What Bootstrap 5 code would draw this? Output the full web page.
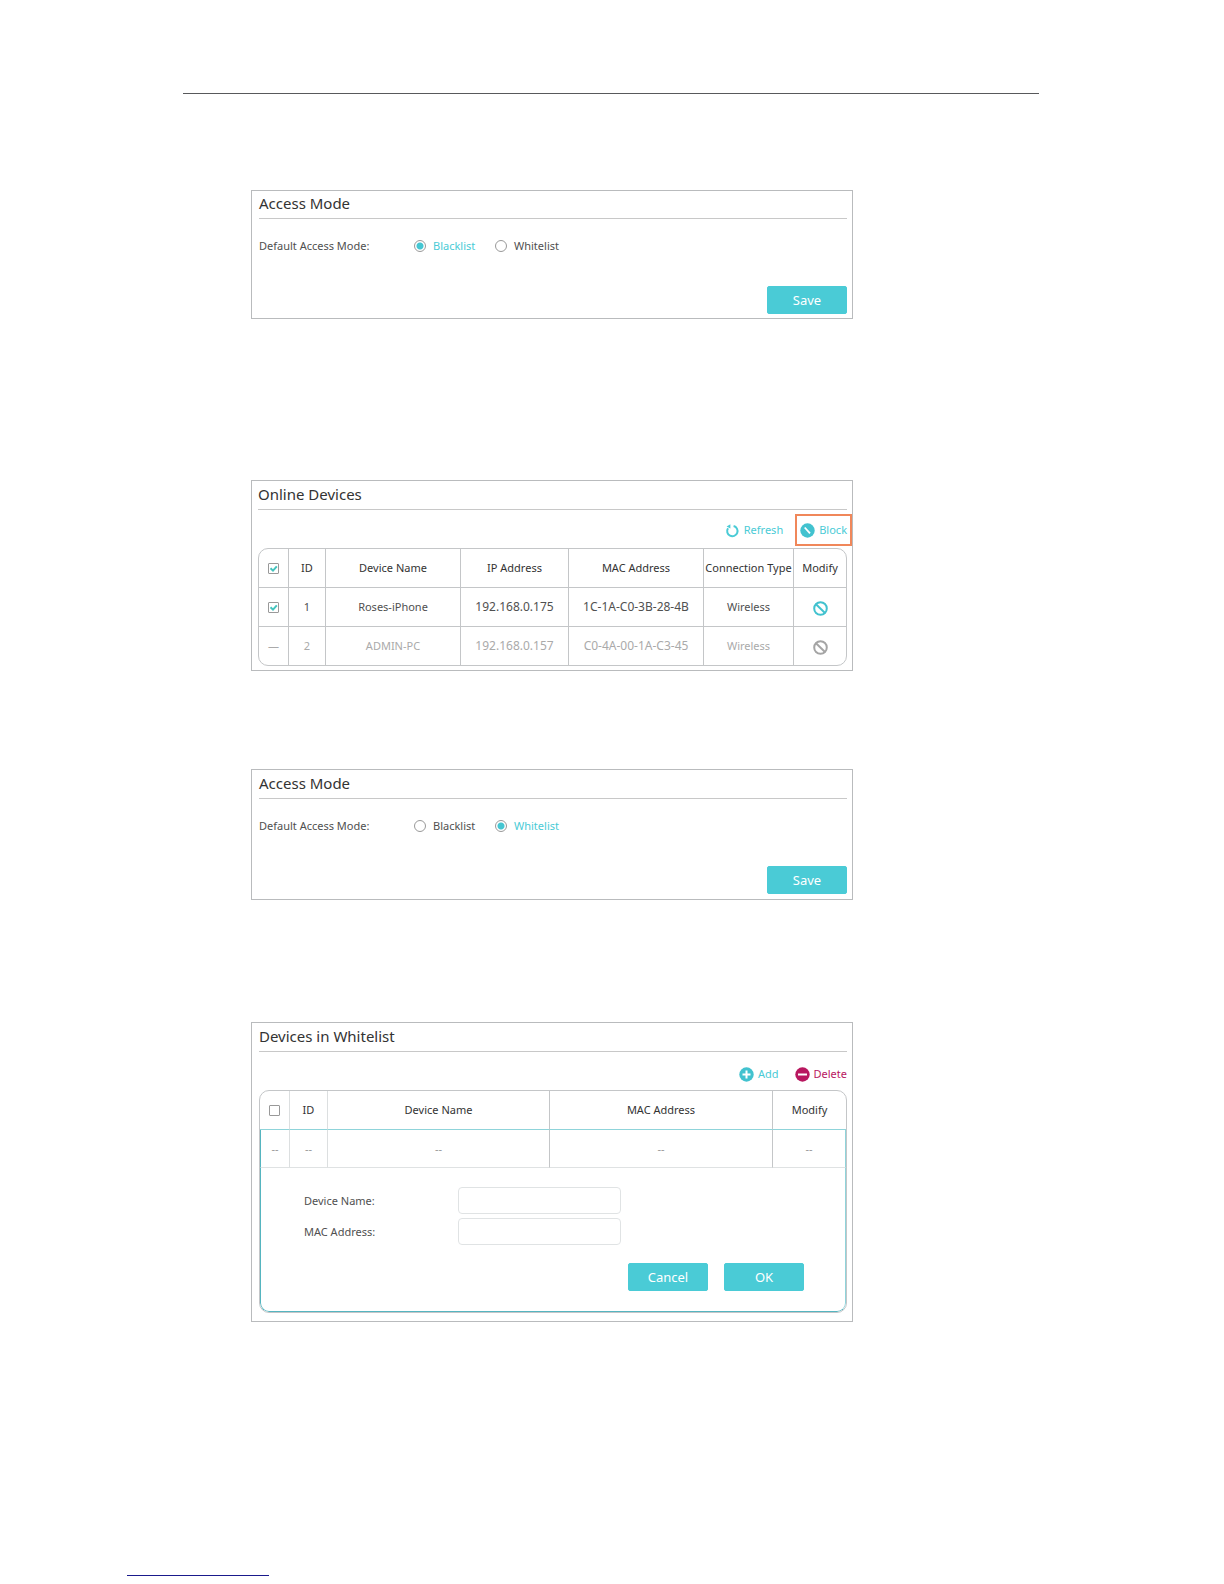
<!DOCTYPE html>
<html lang="en">
<head>
<meta charset="utf-8">
<meta name="viewport" content="width=device-width, initial-scale=1">
<title>Access Control</title>
<link href="https://cdn.jsdelivr.net/npm/bootstrap@5.3.0/dist/css/bootstrap.min.css" rel="stylesheet">
<style>
:root { --teal: #4acbd6; --line: #c4c6c8; }
body { font-family: "Noto Sans", sans-serif; font-size: 11px; line-height: 20px; color: #505050; background: #fff; }
.sheet { padding: 93px 185px 0 183px; }
.rule-top { height: 1px; background: #58595b; }
.sheet-body { padding: 96px 186px 0 68px; }
.panel { border: 1px solid #b9bbbd; padding: 0 5px 4px 7px; }
.panel-tall { padding: 1px 5px 5px 7px; }
.panel-devices { padding: 1px 5px 4px 6px; }
.panel-white { padding: 1px 5px 8px 7px; }
.gap-a { margin-top: 161px; }
.gap-b { margin-top: 98px; }
.gap-c { margin-top: 122px; }
.panel-title { font-size: 15px; line-height: 24px; font-weight: 400; color: #333; margin: 0; padding: 0 0 3px; border-bottom: 1px solid #c8c8c8; }
.mode-row { padding: 17px 0 30px; }
.mode-name { width: 155px; }
.mode-row .form-check-input { width: 12px; height: 12px; margin: 0 7px 0 0; border: 1px solid #999; box-shadow: none; }
.mode-row .form-check-input:checked { background: radial-gradient(circle, #45c6d2 0 3px, #fff 4px); border-color: #999; }
.mode-row input:checked + label { color: var(--teal); }
.mode-first { width: 81px; }
.btn-teal { --bs-btn-color: #fff; --bs-btn-bg: var(--teal); --bs-btn-border-color: var(--teal); --bs-btn-hover-color: #fff; --bs-btn-hover-bg: #38bcc8; --bs-btn-hover-border-color: #38bcc8; --bs-btn-border-radius: 2px; --bs-btn-font-size: 13px; --bs-btn-padding-x: 0; --bs-btn-padding-y: 3px; width: 80px; line-height: 20px; }
.tool { border: 0; background: none; padding: 0; color: var(--teal); display: flex; align-items: center; line-height: 20px; }
.tool-del { color: #b8175f; }
.tools-online { padding: 4px 0 2px; margin-right: -5px; }
.tool-marked { border: 2px solid #f0875a; height: 32px; padding: 0 3px; }
.tools-white { padding: 12px 0 6px; }
.grid-box { border: 1px solid var(--line); border-radius: 10px; overflow: hidden; }
.grid-box table { width: 100%; table-layout: fixed; border-collapse: separate; border-spacing: 0; text-align: center; }
.grid-box th, .grid-box td { height: 39px; padding: 0; font-weight: 400; vertical-align: middle; border-right: 1px solid var(--line); border-bottom: 1px solid var(--line); white-space: nowrap; }
.grid-box th { color: #333; }
.grid-box .addr { font-size: 12px; }
.grid-box tr > :last-child { border-right: 0; }
.grid-online tbody tr:last-child td { border-bottom: 0; height: 38px; }
.grid-box .form-check-input { display: block; width: 11px; height: 11px; margin: 0 auto; border: 1px solid #999; border-radius: 1px; box-shadow: none; }
.grid-box .form-check-input:checked { background-color: #fff; background-size: 9px 9px; background-image: url("data:image/svg+xml,%3csvg xmlns='http://www.w3.org/2000/svg' viewBox='0 0 9 9'%3e%3cpath fill='none' stroke='%2345c4be' stroke-width='2' d='M1.5 4.2 4 6.6 7.8 2.4'/%3e%3c/svg%3e"); }
.grid-box .row-off td { color: #aaa; }
.grid-white thead th { border-bottom-color: #8fd4da; }
.grid-white tr > :nth-child(-n+2) { border-right-color: #dcdfe0; }
.grid-white .row-blank td { height: 38px; color: #999; border-bottom-color: #dfe2e3; }
.grid-white tbody tr > :first-child { border-left: 1px solid #55b5c0; }
.grid-white tbody tr > :last-child { border-right: 1px solid #8fd4da; }
.grid-white .edit-cell { border-bottom: 1px solid #55b5c0; border-radius: 0 0 9px 9px; text-align: left; padding: 19px 41px 20px 43px; }
.edit-cell .form-label { width: 154px; margin: 0; }
.edit-cell .form-control { width: 163px; height: 27px; padding: 2px 8px; font-size: 11px; border: 1px solid #e0e3e4; border-radius: 4px; }
.edit-actions { padding-top: 18px; }
.tail { padding: 253px 0 8px 127px; }
.tail-link { display: block; width: 142px; height: 1px; background: #1a1a8c; }
</style>
<script src="https://cdn.jsdelivr.net/npm/bootstrap@5.3.0/dist/js/bootstrap.bundle.min.js"></script>
</head>
<body>
<main class="sheet">
  <div class="rule-top"></div>
  <div class="sheet-body">

    <section class="panel">
      <h2 class="panel-title">Access Mode</h2>
      <div class="mode-row d-flex align-items-center">
        <span class="mode-name">Default Access Mode:</span>
        <div class="mode-first d-flex align-items-center">
          <input class="form-check-input" type="radio" name="mode1" id="m1b" checked><label for="m1b">Blacklist</label>
        </div>
        <div class="d-flex align-items-center">
          <input class="form-check-input" type="radio" name="mode1" id="m1w"><label for="m1w">Whitelist</label>
        </div>
      </div>
      <div class="d-flex justify-content-end"><button type="button" class="btn btn-teal">Save</button></div>
    </section>

    <section class="panel panel-devices gap-a">
      <h2 class="panel-title">Online Devices</h2>
      <div class="tools-online d-flex justify-content-end align-items-center">
        <button type="button" class="tool me-2 pe-1">
          <svg class="me-1" width="15" height="16" viewBox="0 0 15 16" fill="none" stroke="currentColor" stroke-width="2"><path d="M8.6 4A5.2 5.2 0 1 1 3 6.2"/><path d="M1.6 4.6 5.4 2.2V6.4Z" fill="currentColor" stroke="none"/></svg>Refresh
        </button>
        <button type="button" class="tool tool-marked">
          <svg class="me-1" width="15" height="15" viewBox="0 0 15 15"><circle cx="7.5" cy="7.5" r="7.2" fill="#42c2cf"/><path d="M4.7 4.5 10 10.3" stroke="#fff" stroke-width="1.8"/></svg>Block
        </button>
      </div>
      <div class="grid-box grid-online">
        <table>
          <colgroup><col style="width:30px"><col style="width:37px"><col><col style="width:108px"><col style="width:135px"><col style="width:90px"><col style="width:52px"></colgroup>
          <thead>
            <tr><th><input class="form-check-input" type="checkbox" aria-label="Select all" checked></th><th>ID</th><th>Device Name</th><th>IP Address</th><th>MAC Address</th><th>Connection Type</th><th>Modify</th></tr>
          </thead>
          <tbody>
            <tr><td><input class="form-check-input" type="checkbox" aria-label="Select Roses-iPhone" checked></td><td>1</td><td>Roses-iPhone</td><td class="addr">192.168.0.175</td><td class="addr">1C-1A-C0-3B-28-4B</td><td>Wireless</td>
              <td><svg width="15" height="15" viewBox="0 0 15 15" fill="none" stroke="#42c2cf" stroke-width="2"><circle cx="7.5" cy="7.5" r="6.3"/><path d="M3 3.2 12 12"/></svg></td></tr>
            <tr class="row-off"><td>—</td><td>2</td><td>ADMIN-PC</td><td class="addr">192.168.0.157</td><td class="addr">C0-4A-00-1A-C3-45</td><td>Wireless</td>
              <td><svg width="15" height="15" viewBox="0 0 15 15" fill="none" stroke="#a5a5a5" stroke-width="2"><circle cx="7.5" cy="7.5" r="6.3"/><path d="M3 3.2 12 12"/></svg></td></tr>
          </tbody>
        </table>
      </div>
    </section>

    <section class="panel panel-tall gap-b">
      <h2 class="panel-title">Access Mode</h2>
      <div class="mode-row d-flex align-items-center">
        <span class="mode-name">Default Access Mode:</span>
        <div class="mode-first d-flex align-items-center">
          <input class="form-check-input" type="radio" name="mode2" id="m2b"><label for="m2b">Blacklist</label>
        </div>
        <div class="d-flex align-items-center">
          <input class="form-check-input" type="radio" name="mode2" id="m2w" checked><label for="m2w">Whitelist</label>
        </div>
      </div>
      <div class="d-flex justify-content-end"><button type="button" class="btn btn-teal">Save</button></div>
    </section>

    <section class="panel panel-white gap-c">
      <h2 class="panel-title">Devices in Whitelist</h2>
      <div class="tools-white d-flex justify-content-end gap-3">
        <button type="button" class="tool">
          <svg class="me-1" width="15" height="15" viewBox="0 0 15 15"><circle cx="7.5" cy="7.5" r="7.2" fill="#42c2cf"/><path d="M3.5 7.5H11.5M7.5 3.5V11.5" stroke="#fff" stroke-width="2"/></svg>Add
        </button>
        <button type="button" class="tool tool-del">
          <svg class="me-1" width="15" height="15" viewBox="0 0 15 15"><circle cx="7.5" cy="7.5" r="7.2" fill="#b8175f"/><path d="M3 7.5H12" stroke="#fff" stroke-width="2"/></svg>Delete
        </button>
      </div>
      <div class="grid-box grid-white">
        <table>
          <colgroup><col style="width:30px"><col style="width:38px"><col><col style="width:223px"><col style="width:73px"></colgroup>
          <thead>
            <tr><th><input class="form-check-input" type="checkbox" aria-label="Select all"></th><th>ID</th><th>Device Name</th><th>MAC Address</th><th>Modify</th></tr>
          </thead>
          <tbody>
            <tr class="row-blank"><td>--</td><td>--</td><td>--</td><td>--</td><td>--</td></tr>
            <tr><td colspan="5" class="edit-cell">
              <div class="d-flex align-items-center mb-1"><label class="form-label" for="dev">Device Name:</label><input class="form-control" type="text" id="dev"></div>
              <div class="d-flex align-items-center"><label class="form-label" for="mac">MAC Address:</label><input class="form-control" type="text" id="mac"></div>
              <div class="edit-actions d-flex justify-content-end gap-3"><button type="button" class="btn btn-teal">Cancel</button><button type="button" class="btn btn-teal">OK</button></div>
            </td></tr>
          </tbody>
        </table>
      </div>
    </section>
  </div>
</main>
<footer class="tail"><div class="tail-link"></div></footer>
</body>
</html>
